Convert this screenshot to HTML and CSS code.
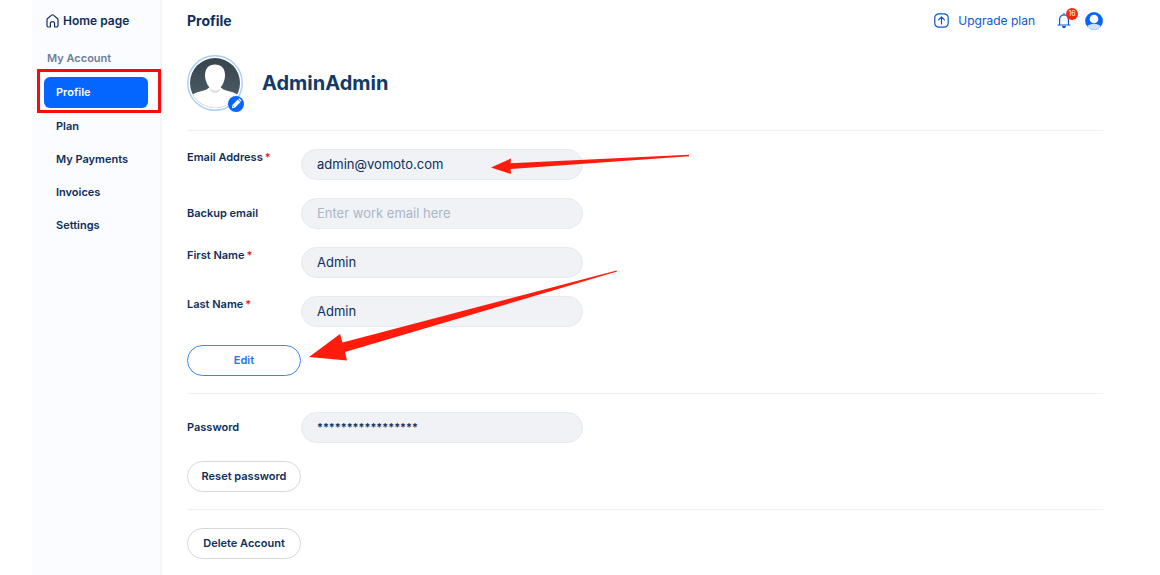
FILE: index.html
```html
<!DOCTYPE html>
<html lang="en">
<head>
  <meta charset="UTF-8" />
  <meta name="viewport" content="width=device-width, initial-scale=1.0" />
  <title>Profile</title>
  <link rel="stylesheet" href="styles.css">
</head>
<body>
  <aside class="sidebar">
    <a class="home-link" href="#">
      <svg width="13" height="14" viewBox="0 0 13 14" fill="none" stroke="currentColor" stroke-width="1.2" stroke-linejoin="round" stroke-linecap="round">
        <path d="M1 5.8Q1 5 1.6 4.5L5.6 1.1Q6.5 .4 7.4 1.1L11.4 4.5Q12 5 12 5.8V11.4Q12 13 10.4 13H9.2Q8.6 13 8.6 12.4V9.6Q8.6 7.6 6.5 7.6T4.4 9.6V12.4Q4.4 13 3.8 13H2.6Q1 13 1 11.4Z"/>
      </svg>
      Home page
    </a>
    <h2 class="menu-title">My Account</h2>
    <nav class="menu">
      <a class="menu-item active" href="#">Profile</a>
      <a class="menu-item" href="#">Plan</a>
      <a class="menu-item" href="#">My Payments</a>
      <a class="menu-item" href="#">Invoices</a>
      <a class="menu-item" href="#">Settings</a>
    </nav>
  </aside>

  <main class="content">
    <header class="topbar">
      <h1>Profile</h1>
      <div class="actions">
        <a class="upgrade" href="#">
          <svg width="15" height="15" viewBox="0 0 15 15" fill="none" stroke="currentColor" stroke-width="1.2" stroke-linecap="round" stroke-linejoin="round">
            <rect x=".8" y=".8" width="13.4" height="13.4" rx="4"/>
            <path d="M7.5 11V4M4.6 6.8L7.5 3.9L10.4 6.8"/>
          </svg>
          Upgrade plan
        </a>
        <button class="icon-button bell" aria-label="Notifications">
          <svg width="14" height="17" viewBox="0 0 14 17" fill="none" stroke="currentColor" stroke-width="1.2" stroke-linecap="round" stroke-linejoin="round">
            <path d="M1 13H13M2.6 12.8V7.2A4.4 4.4 0 0 1 11.4 7.2V12.8M7 2.6V1.4"/>
            <path d="M5.6 14.6A1.5 1.5 0 0 0 8.4 14.6Z" fill="currentColor"/>
          </svg>
          <span class="badge">16</span>
        </button>
        <button class="icon-button" aria-label="Account">
          <svg width="18" height="18" viewBox="0 0 18 18">
            <defs><clipPath id="user-clip"><circle cx="9" cy="9" r="8.9"/></clipPath></defs>
            <g clip-path="url(#user-clip)">
              <rect width="18" height="18" fill="#0565ff"/>
              <ellipse cx="9" cy="17" rx="8" ry="5.2" fill="#cfdfff"/>
              <circle cx="9" cy="7" r="4.3" fill="#fff"/>
            </g>
          </svg>
        </button>
      </div>
    </header>

    <section class="user">
      <div class="avatar">
        <svg width="56" height="56" viewBox="0 0 56 56">
          <defs>
            <linearGradient id="avatar-bg" x1="0" y1="0" x2="0" y2="1">
              <stop offset="0" stop-color="#35424b"/>
              <stop offset="1" stop-color="#52616c"/>
            </linearGradient>
            <clipPath id="avatar-clip"><circle cx="28" cy="28" r="25"/></clipPath>
          </defs>
          <circle cx="28" cy="28" r="27.2" fill="#fff" stroke="#a6cdfb" stroke-width="1.4"/>
          <g clip-path="url(#avatar-clip)">
            <rect width="56" height="56" fill="url(#avatar-bg)"/>
            <path d="M2 56V43Q6 38 13 36.5Q21 35 23.5 31H32.5Q35 35 43 36.5Q50 38 54 43V56Z" fill="#fff"/>
            <path d="M22.5 33Q28 38.5 33.5 33L32 36.5Q28 39 24 36.5Z" fill="#d9dde0"/>
            <path d="M28 9.5C34 9.5 38 13.5 38 20C38 27 34 35 28 35S18 27 18 20C18 13.5 22 9.5 28 9.5Z" fill="#fff"/>
          </g>
          <path d="M9 44Q17 52 28 52.5Q34 52.5 38 51" fill="none" stroke="#e3e5e7" stroke-dasharray="3 1"/>
        </svg>
        <button class="avatar-edit" aria-label="Change photo">
          <svg width="16" height="16" viewBox="0 0 16 16">
            <g transform="rotate(45 8 8)">
              <path d="M6.2 3.6H9.8V11L8 14L6.2 11Z" fill="#fff"/>
              <rect x="6.2" y="1.6" width="3.6" height="1.3" rx=".5" fill="#fff"/>
              <path d="M7.3 11H8.7L8 12.4Z" fill="#0565ff"/>
            </g>
          </svg>
        </button>
      </div>
      <h2>AdminAdmin</h2>
    </section>

    <form class="section details">
      <div class="field">
        <label class="required" for="email">Email Address</label>
        <input type="email" id="email" value="admin@vomoto.com">
      </div>
      <div class="field">
        <label for="backup">Backup email</label>
        <input type="email" id="backup" placeholder="Enter work email here">
      </div>
      <div class="field">
        <label class="required" for="first-name">First Name</label>
        <input type="text" id="first-name" value="Admin">
      </div>
      <div class="field">
        <label class="required" for="last-name">Last Name</label>
        <input type="text" id="last-name" value="Admin">
      </div>
      <button type="button" class="btn btn-primary">Edit</button>

      <svg class="arrow arrow-email" width="200" height="22" viewBox="0 0 200 22" fill="#ff1c0c">
        <path d="M1 13.500L21 4.500L20.500 9.300L199 .8V2.200L20.500 15L21 20Z"/>
      </svg>
      <svg class="arrow arrow-edit" width="310" height="92" viewBox="0 0 310 92" fill="#ff1c0c">
        <path d="M1 87L32 64L34.5 72.500L308.600 .4L309 1.600L37 82L39 90.500Z"/>
      </svg>
    </form>

    <form class="section">
      <div class="field">
        <label for="password">Password</label>
        <input type="text" class="masked" id="password" value="*****************">
      </div>
      <button type="button" class="btn">Reset password</button>
    </form>

    <section class="section">
      <button type="button" class="btn">Delete Account</button>
    </section>
  </main>
</body>
</html>
```

FILE: styles.css
```css
:root {
  --text-color: #0d2f5b;
  --muted: #6d8096;
  --highlight: #0565ff;
  --link: #0b57d0;
  --red: #fb0a0a;
  --input-bg: #f0f2f6;
  --line: #f1f1f3;
}

* {
  box-sizing: border-box;
}

body {
  display: flex;
  min-height: 100vh;
  margin: 0;
  padding: 0 57px 1px 32px;
  background: #fff;
  color: var(--text-color);
  font-family: Inter, sans-serif;
  font-size: 12px;
  line-height: 16px;
}

h1, h2 {
  margin: 0;
}

a {
  color: inherit;
  text-decoration: none;
}

button {
  font-family: inherit;
  color: inherit;
  cursor: pointer;
}

svg {
  display: block;
}

.sidebar {
  flex: 0 0 130px;
  padding: 13px 12px 0;
  background: #fafcff;
  border-right: 2px solid #f4f5f8;
}

.home-link {
  display: flex;
  align-items: center;
  gap: 4px;
  padding-left: 2px;
  font-weight: 600;
}

.menu-title {
  margin: 21px 0 11px 3px;
  color: var(--muted);
  font-size: 11px;
  font-weight: 600;
}

.menu {
  display: flex;
  flex-direction: column;
  gap: 4px;
}

.menu-item {
  padding: 6px 12px 7px;
  font-size: 11px;
  font-weight: 600;
}

.menu-item.active {
  position: relative;
  padding: 7px 12px 8px;
  background: var(--highlight);
  border-radius: 6px;
  color: #fff;
}

.menu-item.active::after {
  content: "";
  position: absolute;
  inset: -8px -13px -5px -7px;
  border: 3px solid var(--red);
}

.content {
  flex: 1;
  padding-left: 25px;
}

.topbar {
  display: flex;
  justify-content: space-between;
  align-items: center;
  height: 41px;
}

.topbar h1 {
  font-size: 14px;
  font-weight: 700;
}

.actions {
  display: flex;
  align-items: center;
  gap: 14px;
  color: var(--link);
}

.upgrade {
  display: flex;
  align-items: center;
  gap: 9px;
  margin-right: 8px;
}

.icon-button {
  position: relative;
  padding: 0;
  background: none;
  border: none;
}

.badge {
  position: absolute;
  top: -4px;
  right: -7px;
  width: 12px;
  height: 12px;
  border-radius: 50%;
  background: #ff2609;
  color: #fff;
  font-size: 7px;
  line-height: 12px;
  text-align: center;
}

.user {
  display: flex;
  align-items: center;
  gap: 19px;
  padding: 14px 0 19px;
}

.user h2 {
  font-size: 20px;
  line-height: 28px;
  font-weight: 700;
  color: #113a66;
}

.avatar {
  position: relative;
}

.avatar-edit {
  position: absolute;
  right: -1px;
  bottom: -1px;
  padding: 0;
  border: none;
  border-radius: 50%;
  background: var(--highlight);
}

.section {
  display: flex;
  flex-direction: column;
  align-items: flex-start;
  gap: 18px;
  padding: 18px 0 17px;
  border-top: 1px solid var(--line);
}

.details {
  position: relative;
}

.field {
  display: flex;
  align-items: center;
}

.field label {
  width: 114px;
  padding-bottom: 2px;
  font-size: 11px;
  font-weight: 600;
}

.field .required {
  align-self: flex-start;
}

.required::after {
  content: "*";
  margin-left: 2px;
  color: #f01525;
}

.field input {
  width: 282px;
  height: 31px;
  padding: 0 15px 2px;
  background: var(--input-bg);
  border: 1px solid #e6e9ed;
  border-radius: 16px;
  color: var(--text-color);
  font-family: inherit;
  font-size: 13px;
}

.field input::placeholder {
  color: #a9b7c6;
}

.field .masked {
  font-size: 11px;
  font-weight: 600;
}

.btn {
  width: 114px;
  height: 31px;
  padding: 0 0 2px;
  background: #fff;
  border: 1px solid #d4d7db;
  border-radius: 16px;
  font-size: 11px;
  font-weight: 600;
}

.btn-primary {
  border-color: #3d86e8;
  color: #2376ea;
}

/* callout arrows drawn over the form */
.arrow {
  position: absolute;
  pointer-events: none;
}

.arrow-email {
  top: 23px;
  left: 303px;
}

.arrow-edit {
  top: 139px;
  left: 121px;
}
```
